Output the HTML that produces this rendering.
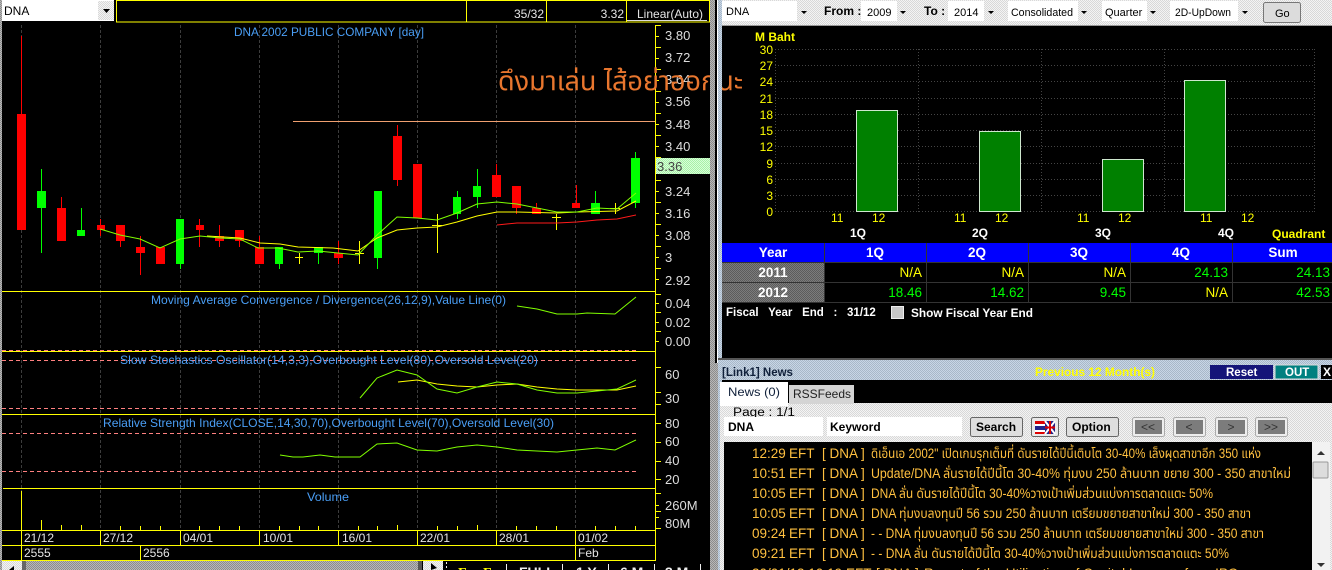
<!DOCTYPE html>
<html><head><meta charset="utf-8"><style>
html,body{margin:0;padding:0;background:#000;width:1332px;height:570px;overflow:hidden}
svg{display:block;font-family:"Liberation Sans","Noto Sans Thai","Tahoma","DejaVu Sans","Noto Sans CJK SC",sans-serif}
.ax{fill:#ddd;font-size:13px}
.t{fill:#4a9ef5;font-size:12px}
.d{fill:#e4e4e4;font-size:12px}
.y{fill:#ffff00;font-size:12px}
.n{fill:#ffc040;font-size:13.5px}
.b{font-weight:bold}
.k{fill:#000;font-size:11px}
.v{font-size:13.5px}
</style></head><body>
<svg width="1332" height="570" viewBox="0 0 1332 570" xmlns="http://www.w3.org/2000/svg">
<defs>
<pattern id="dg" width="2" height="2" patternUnits="userSpaceOnUse"><rect width="2" height="2" fill="#f4f4f4"/><rect width="1" height="1" fill="#d8d8d8"/><rect x="1" y="1" width="1" height="1" fill="#d8d8d8"/></pattern>
<pattern id="db" width="2" height="2" patternUnits="userSpaceOnUse"><rect width="2" height="2" fill="#c8d6e6"/><rect width="1" height="1" fill="#a8b8c8"/><rect x="1" y="1" width="1" height="1" fill="#a8b8c8"/></pattern>
<pattern id="dm" width="2" height="2" patternUnits="userSpaceOnUse"><rect width="2" height="2" fill="#b8b8b8"/><rect width="1" height="1" fill="#8c8c8c"/><rect x="1" y="1" width="1" height="1" fill="#8c8c8c"/></pattern>
<pattern id="dy" width="2" height="2" patternUnits="userSpaceOnUse"><rect width="2" height="2" fill="#7c7c7c"/><rect width="1" height="1" fill="#5c5c5c"/><rect x="1" y="1" width="1" height="1" fill="#5c5c5c"/></pattern>
<pattern id="dl" width="2" height="2" patternUnits="userSpaceOnUse"><rect width="2" height="2" fill="#d8ffd8"/><rect width="1" height="1" fill="#a8f0a8"/><rect x="1" y="1" width="1" height="1" fill="#a8f0a8"/></pattern>
</defs>
<rect width="1332" height="570" fill="#000"/>

<!-- LEFT CHART -->
<rect x="0" y="0" width="2" height="570" fill="url(#dm)"/>
<rect x="2" y="0" width="112" height="21" fill="#fff"/>
<rect x="98" y="1" width="16" height="19" fill="url(#dg)"/>
<path d="M103 9h7l-3.500 4z" fill="#000"/>
<text x="4" y="15" class="k" style="font-size:12px">DNA</text>
<path d="M116.500 .5H709.500V22H116.500Z M466.500 0V22 M546.500 0V22 M626.500 0V22" fill="none" stroke="#ffff00"/>
<text x="544" y="18" text-anchor="end" class="d">35/32</text>
<text x="624" y="18" text-anchor="end" class="d">3.32</text>
<text x="637" y="18" class="d">Linear(Auto)</text>
<path d="M627 20.500H707" stroke="#ddd"/>

<path d="M21.500 25V530 M100.500 25V530 M180.500 25V530 M259.500 25V530 M338.500 25V530 M417.500 25V530 M496.500 25V530 M575.500 25V530" stroke="#3c3c3c" stroke-dasharray="3 2"/>

<text x="234" y="36" class="t" textLength="190" lengthAdjust="spacingAndGlyphs">DNA 2002 PUBLIC COMPANY [day]</text>
<path d="M293 121.500H656" stroke="#f0a070"/>

<path fill="#ff0000" d="M21 36h1v78h-1zM17 114h9v116h-9zM61 197h1v11h-1zM57 208h9v33h-9zM100 219h1v17h-1zM97 225h8v5h-8zM120 225h1v22h-1zM116 225h9v16h-9zM140 236h1v39h-1zM136 247h9v6h-9zM156 247h9v17h-9zM199 219h1v28h-1zM196 225h8v5h-8zM219 225h1v22h-1zM215 236h9v5h-9zM239 230h1v17h-1zM235 230h9v11h-9zM259 236h1v28h-1zM255 247h9v17h-9zM338 241h1v23h-1zM334 253h9v5h-9zM397 125h1v61h-1zM393 136h9v44h-9zM413 164h9v54h-9zM496 164h1v33h-1zM492 175h9v22h-9zM516 186h1v28h-1zM512 186h9v22h-9zM536 203h1v11h-1zM532 208h9v6h-9zM576 185h1v23h-1zM572 203h8v5h-8z"/>
<path fill="#00ff00" d="M41 169h1v84h-1zM37 191h9v17h-9zM81 208h1v28h-1zM77 230h8v6h-8zM180 219h1v50h-1zM176 219h8v45h-8zM279 247h1v22h-1zM275 247h8v17h-8zM318 247h1v17h-1zM314 247h9v6h-9zM377 191h1v78h-1zM374 191h8v67h-8zM457 191h1v28h-1zM453 197h8v17h-8zM477 169h1v39h-1zM473 186h8v11h-8zM595 191h1v23h-1zM591 203h9v11h-9zM635 152h1v56h-1zM631 158h9v45h-9z"/>
<path fill="none" stroke="#ffff00" d="M299.500 253V264M295 257.500H303M359.500 241V264M355 253.500H364M437.500 214V253M432 225.500H442M556.500 214V230M552 217.500H561M615.500 203V214M610 208.500H620"/>
<polyline fill="none" stroke="#ffff00" points="207,236 240,238 260,243 280,244 298,247 333,248 358,251 377,238 397,230 417,228 437,227 457,222 477,216 497,212 517,212 557,213 577,212 617,211 636,201"/>
<polyline fill="none" stroke="#80ff00" points="100,229 120,235 140,239 160,248 180,239 200,236 220,238 240,239 258,248 278,248 298,252 318,251 338,253 358,255 377,235 397,217 417,218 437,220 457,213 477,204 497,202 517,204 537,208 557,212 577,212 597,208 617,209 636,193"/>
<polyline fill="none" stroke="#ff1a1a" points="497,225 517,223 557,223 577,222 597,220 617,219 636,215"/>

<!-- panels -->
<path d="M2 291.500H656 M2 351.500H656 M2 414.500H656 M3 488.500H656 M2 530.500H656 M2 545.500H656 M2 560.500H656 M655.500 25V560.500" fill="none" stroke="#ffff00"/>
<path d="M2 350.500H636 M2 360.500H636 M2 408.500H636 M2 433.500H636 M2 471.500H636" stroke="#ff8080" stroke-dasharray="4 3"/>
<path d="M21.500 491V560 M100.500 530V545 M180.500 530V545 M259.500 530V545 M338.500 530V545 M417.500 530V545 M496.500 530V545 M575.500 530V560 M140.500 545V560 M41.500 520V530 M61.500 525V530 M81.500 525V530 M120.500 526V530 M140.500 526V530 M160.500 526V530 M199.500 526V530 M219.500 526V530 M239.500 526V530 M279.500 526V530 M299.500 526V530 M318.500 526V530 M358.500 526V530 M377.500 526V530 M397.500 525V530 M437.500 526V530 M457.500 526V530 M477.500 525V530 M516.500 526V530 M536.500 526V530 M556.500 526V530 M595.500 526V530 M615.500 526V530 M635.500 526V530" stroke="#ffff00"/>

<text x="151" y="304" class="t" textLength="355" lengthAdjust="spacingAndGlyphs">Moving Average Convergence / Divergence(26,12,9),Value Line(0)</text>
<text x="120" y="364" class="t" textLength="418" lengthAdjust="spacingAndGlyphs">Slow Stochastics Oscillator(14,3,3),Overbought Level(80),Oversold Level(20)</text>
<text x="103" y="427" class="t" textLength="451" lengthAdjust="spacingAndGlyphs">Relative Strength Index(CLOSE,14,30,70),Overbought Level(70),Oversold Level(30)</text>
<text x="307" y="501" class="t" textLength="42" lengthAdjust="spacingAndGlyphs">Volume</text>

<polyline fill="none" stroke="#80ff00" points="517,306 537,309 557,314 577,314 587,313 615,314 636,297"/>
<polyline fill="none" stroke="#ffff00" points="398,382 417,380 437,384 457,386 477,387 497,385 517,384 537,387 557,389 577,390 617,390 636,386"/>
<polyline fill="none" stroke="#80ff00" points="360,398 377,378 397,370 417,375 437,389 457,393 477,387 497,382 517,384 537,390 557,393 577,393 597,391 617,389 636,380"/>
<polyline fill="none" stroke="#80ff00" points="280,455 293,457 303,457 320,455 335,457 360,457 377,444 397,443 417,450 437,451 457,447 477,445 497,447 517,450 537,451 557,452 577,450 597,448 615,450 636,440"/>

<!-- axis ticks -->
<path stroke="#ffff00" d="M656 25.500h5M656 36.500h3M656 47.500h5M656 58.500h3M656 69.500h5M656 80.500h3M656 91.500h5M656 102.500h3M656 113.500h5M656 124.500h3M656 135.500h5M656 146.500h3M656 157.500h5M656 180.500h5M656 191.500h3M656 202.500h5M656 213.500h3M656 224.500h5M656 235.500h3M656 246.500h5M656 257.500h3M656 268.500h5M656 279.500h3M656 294.500h5M656 303.500h3M656 312.500h5M656 322.500h3M656 331.500h5M656 341.500h3M656 367.500h5M656 392.500h5M656 404.500h5M656 423.500h5M656 442.500h5M656 461.500h5M656 479.500h5M656 493.500h5M656 505.500h3M656 511.500h5M656 517.500h3M656 528.500h5"/>
<g class="ax">
<text x="665" y="40">3.80</text><text x="665" y="62">3.72</text><text x="665" y="84">3.64</text><text x="665" y="106">3.56</text><text x="665" y="129">3.48</text><text x="665" y="151">3.40</text>
<text x="665" y="196">3.24</text><text x="665" y="218">3.16</text><text x="665" y="240">3.08</text><text x="665" y="262">3</text><text x="665" y="285">2.92</text>
<text x="665" y="308">0.04</text><text x="665" y="327">0.02</text><text x="665" y="346">0.00</text>
<text x="665" y="379">60</text><text x="665" y="403">30</text>
<text x="665" y="428">80</text><text x="665" y="446">60</text><text x="665" y="465">40</text><text x="665" y="484">20</text>
<text x="665" y="510">260M</text><text x="665" y="528">80M</text>
</g>
<rect x="656" y="158" width="54" height="16" fill="url(#dl)"/>
<text x="657" y="171" font-size="13" fill="#444">3.36</text>

<g class="d">
<text x="24" y="542">21/12</text><text x="103" y="542">27/12</text><text x="183" y="542">04/01</text><text x="263" y="542">10/01</text><text x="342" y="542">16/01</text><text x="420" y="542">22/01</text><text x="499" y="542">28/01</text><text x="578" y="542">01/02</text>
<text x="24" y="557">2555</text><text x="143" y="557">2556</text><text x="578" y="557">Feb</text>
</g>

<!-- bottom strip -->
<rect x="2" y="561" width="416" height="9" fill="url(#dm)"/>
<rect x="2" y="561" width="20" height="9" fill="url(#dg)"/><path d="M9 570l5-4v4z" fill="#000"/>
<rect x="22" y="561" width="4" height="9" fill="#666"/><rect x="418" y="561" width="4" height="9" fill="#555"/>
<rect x="423" y="561" width="20" height="9" fill="url(#dg)"/><path d="M431 563l6 5-6 2z" fill="#000"/>
<g font-size="14" font-weight="bold">
<text x="458" y="577" fill="#ffff00" font-family="Liberation Serif">F</text><text x="483" y="577" fill="#ffff00" font-family="Liberation Serif">F</text>
<text x="519" y="577" fill="#eee">FULL</text><text x="576" y="577" fill="#eee">1 Y</text><text x="620" y="577" fill="#eee">6 M</text><text x="665" y="577" fill="#eee">3 M</text>
</g>
<path d="M446.500 562v2M446.500 566v2M506.500 564V570M562.500 564V570M608.500 564V570M654.500 564V570M700.500 564V570" stroke="#eee"/>

<!-- Thai overlay: painted over the price axis, under the splitter -->
<text x="498" y="90" fill="#e8762e" font-size="27" textLength="245" lengthAdjust="spacingAndGlyphs">ดึงมาเล่น ไส้อย่าออกนะ</text>

<!-- SPLITTER -->
<rect x="710" y="0" width="5" height="570" fill="url(#dm)"/>
<rect x="715" y="0" width="2" height="363" fill="#000"/>
<rect x="717" y="0" width="1" height="363" fill="#fff"/>
<rect x="715" y="363" width="3" height="207" fill="url(#dm)"/>
<rect x="718" y="0" width="4" height="570" fill="url(#db)"/>

<!-- RIGHT TOP BAR -->
<rect x="722" y="0" width="610" height="25" fill="url(#dg)"/>
<rect x="722" y="25" width="610" height="1" fill="#999"/>
<rect x="722" y="1" width="75" height="20" fill="#fff"/>
<rect x="861" y="1" width="36" height="20" fill="#fff"/><rect x="948" y="1" width="36" height="20" fill="#fff"/><rect x="1008" y="1" width="70" height="20" fill="#fff"/><rect x="1102" y="1" width="45" height="20" fill="#fff"/><rect x="1170" y="1" width="68" height="20" fill="#fff"/>
<path fill="#000" d="M801 11h6l-3 3zM900 11h6l-3 3zM988 11h6l-3 3zM1081 11h6l-3 3zM1150 11h6l-3 3zM1242 11h6l-3 3z"/>
<g class="k">
<text x="726" y="15">DNA</text>
<text x="824" y="15" class="b" font-size="12" style="font-size:12px">From :</text>
<text x="867" y="16">2009</text>
<text x="924" y="15" class="b" style="font-size:12px">To :</text>
<text x="954" y="16">2014</text>
<text x="1011" y="16" textLength="62" lengthAdjust="spacingAndGlyphs">Consolidated</text>
<text x="1105" y="16">Quarter</text>
<text x="1175" y="16" textLength="56" lengthAdjust="spacingAndGlyphs">2D-UpDown</text>
</g>
<rect x="1263.500" y="2.500" width="37" height="20" rx="2" fill="#dcdcdc" stroke="#777"/>
<text x="1275" y="17" class="k">Go</text>

<!-- BAR CHART -->
<path d="M775 49.500H1314M775 65.500H1314M775 81.500H1314M775 98.500H1314M775 114.500H1314M775 130.500H1314M775 146.500H1314M775 163.500H1314M775 179.500H1314M775 195.500H1314M775 211.500H1314M775.500 49V212M918.500 49V212M1041.500 49V212M1164.500 49V212M1314.500 49V212" stroke="#444" stroke-dasharray="1 2"/>
<g fill="#008000" stroke="#cfe8cf">
<rect x="856.500" y="110.500" width="41" height="101"/><rect x="979.500" y="131.500" width="41" height="80"/><rect x="1102.500" y="159.500" width="41" height="52"/><rect x="1184.500" y="80.500" width="41" height="131"/>
</g>
<text x="755" y="41" fill="#ffff00" font-size="12" font-weight="bold">M Baht</text>
<g fill="#ffff00" font-size="12" text-anchor="end">
<text x="773" y="54">30</text><text x="773" y="70">27</text><text x="773" y="86">24</text><text x="773" y="103">21</text><text x="773" y="119">18</text><text x="773" y="135">15</text><text x="773" y="151">12</text><text x="773" y="168">9</text><text x="773" y="184">6</text><text x="773" y="200">3</text><text x="773" y="216">0</text>
</g>
<g fill="#ffff00" font-size="12">
<text x="831" y="222">11</text><text x="872" y="222">12</text><text x="954" y="222">11</text><text x="995" y="222">12</text><text x="1077" y="222">11</text><text x="1118" y="222">12</text><text x="1200" y="222">11</text><text x="1241" y="222">12</text>
</g>
<g fill="#fff" font-size="12" font-weight="bold">
<text x="850" y="237">1Q</text><text x="972" y="237">2Q</text><text x="1095" y="237">3Q</text><text x="1218" y="237">4Q</text>
</g>
<text x="1272" y="238" fill="#ffff00" font-size="12" font-weight="bold">Quadrant</text>

<!-- TABLE -->
<rect x="722" y="243" width="610" height="19" fill="#0000ff"/>
<rect x="722" y="263" width="102" height="19" fill="url(#dy)"/>
<rect x="722" y="283" width="102" height="19" fill="url(#dy)"/>
<path d="M722 262.500H1332M722 282.500H1332M722 302.500H1332M824.500 243V302M926.500 243V302M1028.500 243V302M1130.500 243V302M1232.500 243V302" stroke="#333"/>
<g fill="#fff" font-size="13.500" font-weight="bold" text-anchor="middle">
<text x="773" y="257">Year</text><text x="875" y="257">1Q</text><text x="977" y="257">2Q</text><text x="1079" y="257">3Q</text><text x="1181" y="257">4Q</text><text x="1283" y="257">Sum</text>
<text x="773" y="277">2011</text><text x="773" y="297">2012</text>
</g>
<g class="v" text-anchor="end">
<text x="922" y="277" fill="#ffff00">N/A</text><text x="1024" y="277" fill="#ffff00">N/A</text><text x="1126" y="277" fill="#ffff00">N/A</text><text x="1228" y="277" fill="#00ff00">24.13</text><text x="1330" y="277" fill="#00ff00">24.13</text>
<text x="922" y="297" fill="#00ff00">18.46</text><text x="1024" y="297" fill="#00ff00">14.62</text><text x="1126" y="297" fill="#00ff00">9.45</text><text x="1228" y="297" fill="#ffff00">N/A</text><text x="1330" y="297" fill="#00ff00">42.53</text>
</g>
<text x="726" y="316" fill="#fff" font-size="11.500" font-weight="bold" word-spacing="6.500">Fiscal Year End : 31/12</text>
<rect x="891.500" y="306.500" width="12" height="12" fill="#c8c8c8" stroke="#eee"/>
<text x="911" y="317" fill="#fff" font-size="11.500" font-weight="bold" textLength="122" lengthAdjust="spacingAndGlyphs">Show Fiscal Year End</text>

<!-- NEWS PANEL -->
<rect x="718" y="358" width="614" height="2" fill="#555"/>
<rect x="718" y="360" width="614" height="21" fill="url(#db)"/>
<rect x="722" y="380" width="610" height="25" fill="#000"/>
<text x="722" y="376" fill="#10203a" font-size="11.500" font-weight="bold">[Link1] News</text>
<text x="1035" y="376" fill="#ffff00" font-size="11.500" font-weight="bold" textLength="120" lengthAdjust="spacingAndGlyphs">Previous 12 Month(s)</text>
<rect x="1210" y="365" width="63" height="14" fill="#141478"/>
<text x="1226" y="376" fill="#fff" font-size="11.500" font-weight="bold">Reset</text>
<rect x="1275" y="365" width="43" height="14" fill="#008080" stroke="#ddd"/>
<text x="1285" y="376" fill="#fff" font-size="11.500" font-weight="bold">OUT</text>
<rect x="1321" y="365" width="11" height="14" fill="#000"/>
<text x="1323" y="376" fill="#fff" font-size="12" font-weight="bold">X</text>

<rect x="720" y="403" width="612" height="167" fill="url(#dg)"/>
<rect x="720" y="382" width="68" height="24" fill="#fff"/>
<rect x="789" y="385" width="65" height="19" fill="#d4d4d4"/>
<text x="728" y="396" fill="#10203a" font-size="12" textLength="52" lengthAdjust="spacingAndGlyphs">News (0)</text>
<text x="793" y="398" fill="#222" font-size="12" textLength="58" lengthAdjust="spacingAndGlyphs">RSSFeeds</text>
<text x="733" y="416" fill="#000" font-size="11.500" textLength="62" lengthAdjust="spacingAndGlyphs">Page : 1/1</text>
<rect x="724" y="417" width="99" height="19" fill="#fff"/>
<rect x="827" y="417" width="135" height="19" fill="#fff"/>
<text x="728" y="431" fill="#000" font-size="12" font-weight="bold">DNA</text>
<text x="830" y="431" fill="#000" font-size="12" font-weight="bold">Keyword</text>
<rect x="970.500" y="417.500" width="52" height="19" rx="2" fill="#dedede" stroke="#666"/>
<text x="976" y="431" fill="#000" font-size="12" font-weight="bold">Search</text>
<rect x="1031.500" y="417.500" width="27" height="19" rx="2" fill="#e8e8e8" stroke="#666"/>
<rect x="1035" y="421" width="10" height="3" fill="#d00"/><rect x="1035" y="424" width="10" height="2" fill="#fff"/><rect x="1035" y="426" width="10" height="4" fill="#228"/><rect x="1035" y="430" width="10" height="2" fill="#fff"/><rect x="1035" y="432" width="10" height="2" fill="#d00"/>
<rect x="1045" y="421" width="10" height="13" fill="#228"/><path d="M1045 421l10 13M1055 421l-10 13" stroke="#fff" stroke-width="2"/><path d="M1050 421v13M1045 427.500h10" stroke="#d00" stroke-width="2"/>
<rect x="1066.500" y="417.500" width="52" height="19" rx="2" fill="#dedede" stroke="#666"/>
<text x="1072" y="431" fill="#000" font-size="12" font-weight="bold">Option</text>
<g>
<rect x="1132.500" y="417.500" width="32" height="19" rx="2" fill="#eee" stroke="#aaa"/><rect x="1135" y="420" width="27" height="14" fill="#7c7c7c"/>
<rect x="1173.500" y="417.500" width="32" height="19" rx="2" fill="#eee" stroke="#aaa"/><rect x="1176" y="420" width="27" height="14" fill="#7c7c7c"/>
<rect x="1215.500" y="417.500" width="32" height="19" rx="2" fill="#eee" stroke="#aaa"/><rect x="1218" y="420" width="27" height="14" fill="#7c7c7c"/>
<rect x="1255.500" y="417.500" width="32" height="19" rx="2" fill="#eee" stroke="#aaa"/><rect x="1258" y="420" width="27" height="14" fill="#7c7c7c"/>
</g>
<g fill="#333" font-size="12" text-anchor="middle"><text x="1148" y="431">&lt;&lt;</text><text x="1189" y="431">&lt;</text><text x="1231" y="431">&gt;</text><text x="1271" y="431">&gt;&gt;</text></g>

<rect x="724" y="442" width="588" height="128" fill="#000"/>
<rect x="1312" y="442" width="18" height="128" fill="#f2f2f2"/>
<rect x="1313" y="462" width="15" height="16" rx="1" fill="#ddd" stroke="#999"/>
<path d="M1317 455l4-4 4 4zM1317 563h8l-4 4z" fill="#333"/>
<g class="n">
<text x="752" y="458">12:29</text><text x="789" y="458">EFT</text><text x="822" y="458">[ DNA ]</text><text x="871" y="458" textLength="390" lengthAdjust="spacingAndGlyphs">ดิเอ็นเอ 2002" เปิดเกมรุกเต็มที่ ดันรายได้ปีนี้เติบโต 30-40% เล็งผุดสาขาอีก 350 แห่ง</text>
<text x="752" y="478">10:51</text><text x="789" y="478">EFT</text><text x="822" y="478">[ DNA ]</text><text x="871" y="478" textLength="420" lengthAdjust="spacingAndGlyphs">Update/DNA ลั่นรายได้ปีนี้โต 30-40% ทุ่มงบ 250 ล้านบาท ขยาย 300 - 350 สาขาใหม่</text>
<text x="752" y="498">10:05</text><text x="789" y="498">EFT</text><text x="822" y="498">[ DNA ]</text><text x="871" y="498" textLength="342" lengthAdjust="spacingAndGlyphs">DNA ลั่น ดันรายได้ปีนี้โต 30-40%วางเป้าเพิ่มส่วนแบ่งการตลาดแตะ 50%</text>
<text x="752" y="518">10:05</text><text x="789" y="518">EFT</text><text x="822" y="518">[ DNA ]</text><text x="871" y="518" textLength="380" lengthAdjust="spacingAndGlyphs">DNA ทุ่มงบลงทุนปี 56 รวม 250 ล้านบาท เตรียมขยายสาขาใหม่ 300 - 350 สาขา</text>
<text x="752" y="538">09:24</text><text x="789" y="538">EFT</text><text x="822" y="538">[ DNA ]</text><text x="871" y="538" textLength="393" lengthAdjust="spacingAndGlyphs">- - DNA ทุ่มงบลงทุนปี 56 รวม 250 ล้านบาท เตรียมขยายสาขาใหม่ 300 - 350 สาขา</text>
<text x="752" y="558">09:21</text><text x="789" y="558">EFT</text><text x="822" y="558">[ DNA ]</text><text x="871" y="558" textLength="358" lengthAdjust="spacingAndGlyphs">- - DNA ลั่น ดันรายได้ปีนี้โต 30-40%วางเป้าเพิ่มส่วนแบ่งการตลาดแตะ 50%</text>
<text x="752" y="578">30/01/13 10:19</text><text x="846" y="578">EFT</text><text x="876" y="578">[ DNA ]</text><text x="924" y="578">Report of the Utilization of Capital Increase from IPO</text>
</g>
</svg>
</body></html>
